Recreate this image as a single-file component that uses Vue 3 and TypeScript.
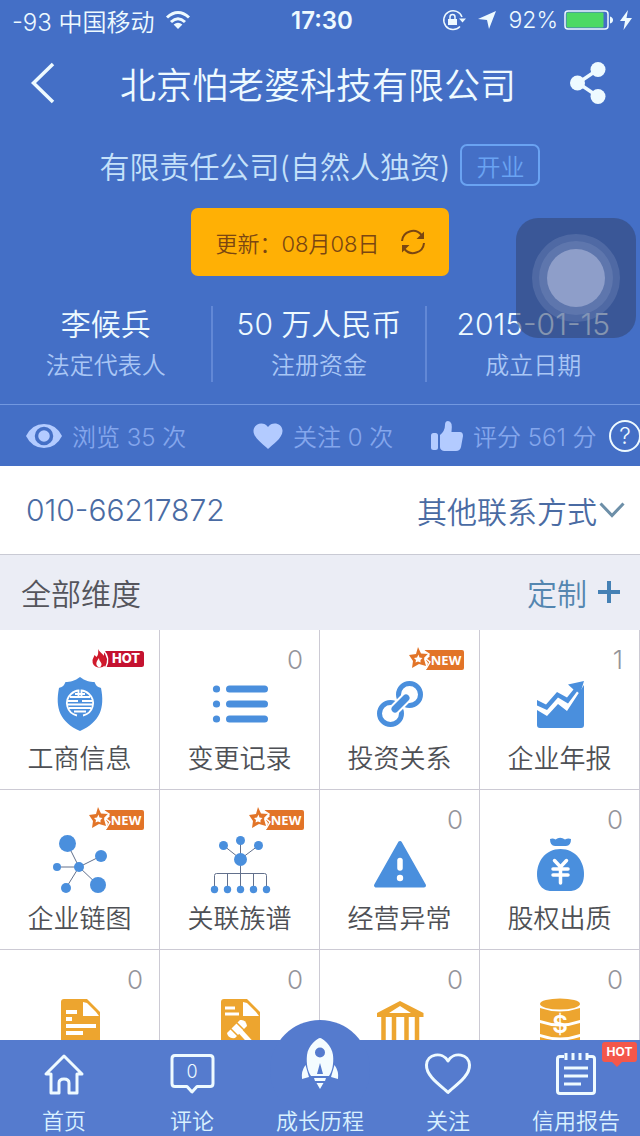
<script setup lang="ts">
interface Stat {
  value: string
  label: string
}

interface Dimension {
  name?: string
  icon: string
  count?: number
  badge?: 'hot' | 'new'
}

const stats: Stat[] = [
  { value: '李候兵', label: '法定代表人' },
  { value: '50 万人民币', label: '注册资金' },
  { value: '2015-01-15', label: '成立日期' },
]

const dimensions: Dimension[] = [
  { name: '工商信息', icon: 'shield', badge: 'hot' },
  { name: '变更记录', icon: 'list', count: 0 },
  { name: '投资关系', icon: 'link', badge: 'new' },
  { name: '企业年报', icon: 'chart', count: 1 },
  { name: '企业链图', icon: 'network', badge: 'new' },
  { name: '关联族谱', icon: 'tree', badge: 'new' },
  { name: '经营异常', icon: 'warning', count: 0 },
  { name: '股权出质', icon: 'bag', count: 0 },
  { icon: 'document', count: 0 },
  { icon: 'gavel', count: 0 },
  { icon: 'bank', count: 0 },
  { icon: 'coins', count: 0 },
]
</script>

<template>
  <div class="app">
    <header class="hero">
      <div class="status">
        <div class="status-side">
          <span>-93 中国移动</span>
          <svg class="wifi" viewBox="0 0 26 20" aria-hidden="true">
            <path d="M2 7.5Q13 -2.5 24 7.5M6 12Q13 5.6 20 12" fill="none" stroke="currentColor" stroke-width="3" />
            <path d="M8.6 14.6Q13 11 17.4 14.6L13 19Z" fill="currentColor" />
          </svg>
        </div>
        <time class="clock">17:30</time>
        <div class="status-side end">
          <svg class="lock" viewBox="0 0 24 22" aria-hidden="true">
            <path d="M20 8A9.4 9.4 0 1 0 18 17.6" fill="none" stroke="currentColor" stroke-width="1.5" />
            <path d="M17 9.5H24L20.5 13.5ZM6 10H15V16H6Z" fill="currentColor" />
            <path d="M8 10V8Q8 5.5 10.500 5.500T13 8V10" fill="none" stroke="currentColor" stroke-width="1.500" />
          </svg>
          <svg class="arrow" viewBox="0 0 18 18" aria-hidden="true">
            <path d="M18 0L11 18L9 9L0 8Z" fill="currentColor" />
          </svg>
          <span class="percent">92%</span>
          <svg class="battery" viewBox="0 0 50 20" aria-hidden="true">
            <rect x="1" y="1" width="43" height="18" rx="3" fill="none" stroke="currentColor" stroke-width="1.500" />
            <rect x="2.500" y="2.500" width="37" height="15" rx="1" fill="#4cd964" />
            <path d="M46 6.500Q49 7.500 49 10T46 13.500Z" fill="currentColor" />
          </svg>
          <svg class="bolt" viewBox="0 0 12 20" aria-hidden="true">
            <path d="M8 0L0 11H5L3.500 20L12 8H6.500Z" fill="currentColor" />
          </svg>
        </div>
      </div>

      <div class="title-bar">
        <button class="plain" type="button" aria-label="返回">
          <svg class="back" viewBox="0 0 26 44" aria-hidden="true">
            <path d="M23 3L3.500 22L23 41" fill="none" stroke="currentColor" stroke-width="3.500" />
          </svg>
        </button>
        <h1>北京怕老婆科技有限公司</h1>
        <button class="plain share-button" type="button" aria-label="分享">
          <svg class="share" viewBox="0 0 36 42" aria-hidden="true">
            <path d="M28 7.500L8 21L28 34.500" fill="none" stroke="currentColor" stroke-width="3.500" />
            <circle cx="28" cy="7.500" r="7.500" fill="currentColor" />
            <circle cx="7.500" cy="21" r="7.500" fill="currentColor" />
            <circle cx="28" cy="34.500" r="7.500" fill="currentColor" />
          </svg>
        </button>
      </div>

      <div class="kind">
        <span>有限责任公司(自然人独资)</span>
        <span class="tag">开业</span>
      </div>

      <button class="update" type="button">
        <span>更新：</span>
        <span class="date">08月08日</span>
        <svg class="refresh" viewBox="0 0 26 26" aria-hidden="true">
          <path d="M2 12A11 11 0 0 1 21.500 6M24 14A11 11 0 0 1 4.500 20" fill="none" stroke="currentColor" stroke-width="2" />
          <path d="M24 2.500V10H16.500ZM2 23.500V16H9.500Z" fill="currentColor" />
        </svg>
      </button>

      <dl class="stats">
        <div v-for="s in stats" :key="s.label" class="stat">
          <dt>{{ s.label }}</dt>
          <dd>{{ s.value }}</dd>
        </div>
      </dl>

      <div class="social">
        <span class="metric">
          <svg class="eye" viewBox="0 0 36 26" aria-hidden="true">
            <path d="M0 13Q6 1 18 1T36 13Q30 25 18 25T0 13Z" fill="currentColor" />
            <circle cx="18" cy="13" r="7.500" fill="none" stroke="#446fc6" stroke-width="3.500" />
            <path d="M18 9.500A3.500 3.500 0 1 0 21.500 13H18Z" fill="currentColor" />
          </svg>
          浏览 35 次
        </span>
        <span class="metric">
          <svg class="heart" viewBox="0 0 30 26" aria-hidden="true">
            <path d="M15 26C11 22 0 15 .5 7.500C1 0 11 -2 15 4C19 -2 29 0 29.500 7.500C30 15 19 22 15 26Z" fill="currentColor" />
          </svg>
          关注 0 次
        </span>
        <span class="metric">
          <svg class="thumb" viewBox="0 0 32 30" aria-hidden="true">
            <rect x="0" y="12" width="7" height="17" rx="2.500" fill="currentColor" />
            <path d="M9 14Q14 10 14 4Q14 0 17 0Q22 0 20.500 11H29Q32 11 32 15L30 26Q29 30 25 30H13Q9 29 9 26Z" fill="currentColor" />
          </svg>
          评分 561 分
        </span>
        <button class="help" type="button" aria-label="评分说明">?</button>
      </div>
    </header>

    <section class="contact">
      <a href="tel:010-66217872">010-66217872</a>
      <button class="plain more" type="button">
        其他联系方式
        <svg class="chevron" viewBox="0 0 26 18" aria-hidden="true">
          <path d="M1.500 2.500L13 14.500L24.500 2.500" fill="none" stroke="#6d8fa8" stroke-width="3" />
        </svg>
      </button>
    </section>

    <main class="dimensions">
      <div class="section-head">
        <h2>全部维度</h2>
        <button class="plain customize" type="button">
          定制
          <svg class="plus" viewBox="0 0 24 24" aria-hidden="true">
            <path d="M12 1V23M1 12H23" stroke="#4581b5" stroke-width="4" />
          </svg>
        </button>
      </div>

      <div class="grid">
        <button v-for="d in dimensions" :key="d.icon" class="cell" type="button">
          <span v-if="d.count !== undefined" class="count">{{ d.count }}</span>
          <svg v-if="d.badge === 'hot'" class="badge" viewBox="0 0 56 26" role="img" aria-label="HOT">
            <rect x="16" y="5" width="40" height="16" rx="2.500" fill="#c41230" />
            <path d="M10 3C12 7 17.500 9 18 15Q18 21 12 21.500H10Q4 20 4.500 14C5 12 6 11 6.500 9L8.500 11Q11 8 10 3Z" fill="#d01a2c" />
            <path d="M11 21.500C7 19 8 16 11 12C11 15.500 14 16 13.500 19Q13 21 11 21.500Z" fill="#fff" />
            <path d="M15 4Q23 12 17.500 22" fill="none" stroke="#fff" stroke-width="1.500" />
            <text x="38" y="17" class="badge-hot">HOT</text>
          </svg>
          <svg v-if="d.badge === 'new'" class="badge" viewBox="0 0 56 26" role="img" aria-label="NEW">
            <path d="M16 4H54Q56 4 56 6V22Q56 24 54 24H18L20 17L18 14L22 10Z" fill="#e27428" />
            <path d="M10 1L13 7.500L20 8L16 13L18 20L11 18L4 22L5 15L1 9L8 8Z" fill="#e27428" />
            <path d="M10.500 8.500L11.500 11.500L14.500 12L12.500 14L12.500 16.500L10 15.500L7.500 16.500L8 14L6 12L9 11.500Z" fill="#fff" />
            <path d="M15 4L21 8L17 12L22 16L18 23" fill="none" stroke="#fff" stroke-width="1.500" />
            <text x="38" y="19" class="badge-new">NEW</text>
          </svg>

          <svg class="icon" viewBox="48 42 64 64" aria-hidden="true">
            <g v-if="d.icon === 'shield'">
              <path d="M80 47C75 51 70 52 65.500 52C64 56 62 57 59 58C55 78 60 92 80 101C100 92 105 78 101 58C98 57 96 56 94.500 52C90 52 85 51 80 47Z" />
              <g fill="none" stroke="#fff" stroke-width="1.800">
                <path d="M77 85.500A12.500 12.500 0 0 1 71 64Q75 60.500 78.500 60.500V68M83 85.500A12.500 12.500 0 0 0 89 64Q85 60.500 81.500 60.500V68" />
                <path d="M70 67H90M68 71H78M82 71H92M67.500 74.500H92.500M69 78H91M74 81.500H86M75 64H85" />
              </g>
            </g>
            <g v-else-if="d.icon === 'list'">
              <template v-for="y in [59, 74, 89]" :key="y">
                <circle cx="56.500" :cy="y" r="3.600" />
                <rect x="66" :y="y - 3.5" width="42" height="7" rx="3.500" />
              </template>
            </g>
            <g v-else-if="d.icon === 'link'" fill="none">
              <circle cx="89.500" cy="64.500" r="11" stroke="#4a8fdd" stroke-width="5" />
              <circle cx="70.500" cy="83.500" r="11" stroke="#4a8fdd" stroke-width="5" />
              <path d="M75 79L86 68" stroke="#fff" stroke-width="11" stroke-linecap="round" />
              <path d="M75 79L86 68" stroke="#4a8fdd" stroke-width="7" stroke-linecap="round" />
            </g>
            <g v-else-if="d.icon === 'chart'">
              <path d="M57 80L67 86L78 74L87 81L104 55V95Q104 98 101 98H60Q57 98 57 95Z" />
              <path d="M57 70L66 74.500L77 62L87 67.500L93.500 59.500L88 54.500L104 51L100 64L97 61.500L88 73.500L78 67.500L67 80L57 75.500Z" />
            </g>
            <g v-else-if="d.icon === 'network'">
              <path d="M67 53L79 77L101 66M57 77H79L66 98M79 77L98 95" fill="none" stroke="#62708c" />
              <circle cx="79" cy="77" r="5" />
              <circle cx="67.500" cy="53.500" r="8.500" />
              <circle cx="101" cy="66" r="6" />
              <circle cx="98" cy="95" r="8" />
              <circle cx="66" cy="98" r="5" />
              <circle cx="57" cy="77" r="4" />
            </g>
            <g v-else-if="d.icon === 'tree'">
              <path d="M80.500 50V99M63.500 55.500L80.500 69L98.500 55.500M54.500 99V85.500Q54.500 83.500 56.500 83.500H104.500Q106.500 83.500 106.500 85.500V99M67.500 83.500V99M93.500 83.500V99" fill="none" stroke="#62708c" />
              <circle cx="80.500" cy="69.500" r="6.500" />
              <circle cx="80.500" cy="50.500" r="4.500" />
              <circle cx="63.500" cy="55.500" r="4.500" />
              <circle cx="98.500" cy="55.500" r="4.500" />
              <circle v-for="x in [54.5, 67.5, 80.5, 93.5, 106.5]" :key="x" :cx="x" cy="99.500" r="3.700" />
            </g>
            <g v-else-if="d.icon === 'warning'">
              <path d="M80 53L56 95.500H104Z" stroke="#4a8fdd" stroke-width="4" stroke-linejoin="round" />
              <path d="M80 70.500V78" stroke="#fff" stroke-width="5.500" stroke-linecap="round" />
              <circle cx="80" cy="88" r="3.200" fill="#fff" />
            </g>
            <g v-else-if="d.icon === 'bag'">
              <path d="M70 49Q73 48 75.500 49.500Q80 46 85 49.500Q88 48 91 49Q91 56 86 56H75Q70 56 70 49Z" />
              <path d="M80.500 59C96 59 104 72 104 84C104 97 96 101 90 101H71C65 101 57 97 57 84C57 72 65 59 80.500 59Z" />
              <path d="M74.500 70.500L80.500 77L86.500 70.500M80.500 77V93M73 79H88M73 85H88" fill="none" stroke="#fff" stroke-width="3.500" stroke-linecap="round" />
            </g>
            <g v-else-if="d.icon === 'document'" class="gold">
              <path d="M64 49H87L100 62V104H61V52Q61 49 64 49Z" />
              <path d="M83 52V66H99L96 62L87 53Z" fill="#fff" />
              <path d="M66 62H77M66 69H72M66 76H96M66 83H83" stroke="#fff" stroke-width="4" />
            </g>
            <g v-else-if="d.icon === 'gavel'" class="gold">
              <path d="M64 49H87L100 62V104H61V52Q61 49 64 49Z" />
              <path d="M83 52V66H99L96 62L87 53Z" fill="#fff" />
              <path d="M65 58H75M65 64H79" stroke="#fff" stroke-width="3" />
              <path d="M67 83L80 70Q86 69 87 76L75 88Q68 89 67 83Z" fill="#fff" />
              <path d="M70 78L79 87M76 72L85 81" stroke="#eda52f" stroke-width="1.500" />
              <path d="M80 81L92 94" stroke="#fff" stroke-width="5" />
            </g>
            <g v-else-if="d.icon === 'bank'" class="gold">
              <path d="M80 51L103.500 63V67H57V63ZM80 56L69 63H91Z" fill-rule="evenodd" />
              <path d="M63.500 67V96M74 67V96M86.500 67V96M97 67V96" stroke="#eda52f" stroke-width="4.500" />
              <path d="M57 98H104" stroke="#eda52f" stroke-width="5" />
            </g>
            <g v-else class="gold">
              <ellipse cx="80" cy="54" rx="20" ry="5.500" />
              <path d="M60 58Q80 65 100 58V70Q80 77 60 70ZM60 73Q80 80 100 73V84Q80 91 60 84ZM60 87Q80 94 100 87V97Q80 104 60 97Z" />
              <text x="80" y="83" class="dollar">$</text>
            </g>
          </svg>
          <span v-if="d.name" class="name">{{ d.name }}</span>
        </button>
      </div>
    </main>

    <nav class="tabs">
      <a href="#home" class="tab">
        <svg class="tab-icon" viewBox="36 10 56 50" aria-hidden="true">
          <path d="M64 16L46 34H51V53H59V43Q59 39 64 39T69 43V53H77V34H82Z" />
        </svg>
        <span>首页</span>
      </a>
      <a href="#comments" class="tab">
        <svg class="tab-icon" viewBox="36 10 56 50" aria-hidden="true">
          <path d="M47 15.500H82Q85 15.500 85 18.500V43.500Q85 46.500 82 46.500H69L64 52L59 46.500H47Q44 46.500 44 43.500V18.500Q44 15.500 47 15.500Z" />
          <text x="64" y="38" class="bubble-count">0</text>
        </svg>
        <span>评论</span>
      </a>
      <a href="#history" class="tab raised">
        <svg class="tab-icon" viewBox="36 10 56 50" aria-hidden="true">
          <g class="solid">
            <path d="M64 -2C62 -2 52 5 51 15C50 24 52 32 55 36H73C76 32 78 24 77 15C76 5 66 -2 64 -2ZM64 7.500A5 5 0 1 1 64 17.500A5 5 0 1 1 64 7.500ZM64 23L67 34H61Z" fill-rule="evenodd" />
            <path d="M49.500 25L53 37L46 39Q45 31 49.500 25ZM78.500 25L75 37L82 39Q83 31 78.500 25Z" />
            <path d="M58 38H70L69 41H59ZM60.500 43H67.500L64 49Z" />
          </g>
        </svg>
        <span>成长历程</span>
      </a>
      <a href="#follow" class="tab">
        <svg class="tab-icon" viewBox="36 10 56 50" aria-hidden="true">
          <path d="M64 52.500C59 47 42 37 42.500 25C43 14 58 11 64 21C70 11 85 14 85.500 25C86 37 69 47 64 52.500Z" />
        </svg>
        <span>关注</span>
      </a>
      <a href="#report" class="tab">
        <svg class="tab-icon" viewBox="36 10 56 50" aria-hidden="true">
          <path d="M52 16.500H48Q45.500 16.500 45.500 19V51Q45.500 53.500 48 53.500H80Q82.500 53.500 82.500 51V19Q82.500 16.500 80 16.500H76M54 13V20M61 13V20M68 13V20M75 13V20M52 28H76M52 36H76M52 44H69" />
        </svg>
        <span>信用报告</span>
        <span class="tab-hot">HOT</span>
      </a>
    </nav>

    <button class="assistive" type="button" aria-label="辅助触控">
      <span class="ring"><span class="ring inner"><span class="knob"></span></span></span>
    </button>
  </div>
</template>

<style>
body {
  margin: 0;
}
</style>

<style scoped>
.app {
  --blue: #446fc6;
  --pale: #eefaff;
  position: relative;
  display: flex;
  flex-direction: column;
  height: 100vh;
  overflow: hidden;
  background: #fff;
  font-family: Inter, "Noto Sans CJK SC", sans-serif;
  font-weight: 350;
}

.app *,
.app *::before {
  box-sizing: border-box;
}

button {
  font: inherit;
  color: inherit;
  padding: 0;
  border: 0;
  background: none;
  cursor: pointer;
}

a {
  color: inherit;
  text-decoration: none;
}

svg {
  display: block;
  flex: none;
}

.plain {
  display: flex;
  align-items: center;
}

.hero {
  flex: none;
  background: var(--blue);
  color: var(--pale);
}

.status {
  display: grid;
  grid-template-columns: 1fr auto 1fr;
  align-items: center;
  height: 40px;
  padding: 0 8px 0 12px;
  font-size: 24px;
}

.status-side {
  display: flex;
  align-items: center;
  gap: 10px;
  white-space: nowrap;
}

.end {
  justify-content: flex-end;
  gap: 6px;
}

.clock {
  font-weight: 600;
}

.percent {
  font-size: 23px;
}

.wifi {
  width: 26px;
  height: 20px;
}

.lock {
  width: 24px;
  height: 22px;
}

.arrow {
  width: 18px;
  height: 18px;
  margin: 0 6px;
}

.battery {
  width: 50px;
  height: 20px;
}

.bolt {
  width: 12px;
  height: 20px;
}

.title-bar {
  display: grid;
  grid-template-columns: 1fr auto 1fr;
  align-items: center;
  height: 86px;
  padding: 0 34px 0 30px;
}

h1 {
  margin: 0;
  font-size: 36px;
  font-weight: 350;
}

.back {
  width: 26px;
  height: 44px;
}

.share-button {
  justify-self: end;
}

.share {
  width: 36px;
  height: 42px;
}

.kind {
  display: flex;
  align-items: center;
  justify-content: center;
  gap: 10px;
  height: 78px;
  font-size: 30px;
  color: #c5e1fa;
}

.tag {
  display: flex;
  align-items: center;
  justify-content: center;
  width: 80px;
  height: 42px;
  border: 2px solid #6aa3f2;
  border-radius: 7px;
  font-size: 24px;
  color: #6aa3f2;
}

.update {
  display: flex;
  align-items: center;
  height: 68px;
  margin: 4px auto 0;
  padding: 0 23px 0 24px;
  border-radius: 7px;
  background: #ffb005;
  font-size: 22px;
  color: #7a4612;
}

.date {
  margin-right: 20px;
}

.refresh {
  width: 26px;
  height: 26px;
}

.stats {
  display: grid;
  grid-template-columns: repeat(3, 1fr);
  margin: 0;
  padding: 30px 0 22px;
}

.stat {
  display: flex;
  flex-direction: column-reverse;
  align-items: center;
  height: 76px;
}

.stat:not(:last-child) {
  border-right: 2px solid #6288d6;
}

.stat dt {
  line-height: 32px;
  font-size: 24px;
  color: #a9c6f5;
}

.stat dd {
  margin: 0 0 8px;
  line-height: 36px;
  font-size: 30px;
}

.social {
  display: grid;
  grid-template-columns: 227fr 178fr 178fr 31px;
  align-items: center;
  height: 62px;
  padding-left: 26px;
  border-top: 1px solid #7298e0;
  font-size: 24px;
  color: #84a6ec;
}

.metric {
  display: flex;
  align-items: center;
  gap: 10px;
  white-space: nowrap;
}

.metric svg {
  color: #b3cbff;
}

.eye {
  width: 36px;
  height: 26px;
}

.heart {
  width: 30px;
  height: 26px;
}

.thumb {
  width: 32px;
  height: 30px;
}

.help {
  width: 32px;
  height: 32px;
  border: 2px solid var(--pale);
  border-radius: 50%;
  font-size: 23px;
  line-height: 28px;
  color: var(--pale);
}

.contact {
  flex: none;
  display: flex;
  align-items: center;
  justify-content: space-between;
  height: 88px;
  padding: 0 15px 0 26px;
  font-size: 30px;
  color: #4a6ba3;
}

.chevron {
  width: 26px;
  height: 18px;
  margin-left: 2px;
}

.dimensions {
  flex: 1;
  min-height: 0;
  overflow: auto;
  scrollbar-width: none;
}

.section-head {
  display: flex;
  align-items: center;
  justify-content: space-between;
  height: 76px;
  padding: 0 19px 2px 21px;
  border-top: 1px solid #c9cad4;
  background: #ebedf5;
}

h2 {
  margin: 0;
  font-size: 30px;
  font-weight: 350;
  color: #55555c;
}

.customize {
  gap: 10px;
  font-size: 30px;
  color: #5486b0;
}

.plus {
  width: 24px;
  height: 24px;
}

.grid {
  display: grid;
  grid-template-columns: repeat(4, 1fr);
}

.cell {
  position: relative;
  display: flex;
  flex-direction: column;
  align-items: center;
  height: 160px;
  padding-top: 42px;
  border-right: 1px solid #cccad4;
  border-bottom: 1px solid #cccad4;
  font-size: 26px;
  color: #4e5055;
}

.icon {
  width: 64px;
  height: 64px;
  fill: #4a8fdd;
}

.gold {
  fill: #eda52f;
}

.dollar {
  fill: #fff;
  font-size: 24px;
  font-weight: 600;
  text-anchor: middle;
}

.name {
  margin-top: 3px;
  line-height: 40px;
}

.count {
  position: absolute;
  top: 14px;
  right: 16px;
  line-height: 32px;
  color: #94949a;
}

.badge {
  position: absolute;
  top: 16px;
  right: 15px;
  width: 56px;
  height: 26px;
}

.badge-hot,
.badge-new {
  fill: #fff;
  font-size: 13px;
  font-weight: 800;
  text-anchor: middle;
}

.badge-new {
  font-family: "Open Sans", sans-serif;
  font-weight: 700;
}

.tabs {
  position: relative;
  flex: none;
  display: grid;
  grid-template-columns: repeat(5, 1fr);
  height: 96px;
  background: #557bce;
  color: #d9f1ff;
}

.tab {
  position: relative;
  display: flex;
  flex-direction: column;
  align-items: center;
  padding-top: 10px;
  font-size: 22px;
  line-height: 32px;
}

.tab-icon {
  position: relative;
  width: 56px;
  height: 50px;
  margin-bottom: 5px;
  overflow: visible;
  fill: none;
  stroke: var(--pale);
  stroke-width: 3px;
  stroke-linejoin: round;
}

.solid {
  fill: #f4fcff;
  stroke: none;
}

.bubble-count {
  fill: var(--pale);
  stroke: none;
  font-size: 18px;
  text-anchor: middle;
}

.raised::before {
  content: "";
  position: absolute;
  top: -20px;
  width: 100px;
  height: 100px;
  border-radius: 50%;
  background: #557bce;
}

.raised span {
  position: relative;
}

.tab-hot {
  position: absolute;
  top: 2px;
  right: 3px;
  width: 35px;
  height: 20px;
  border-radius: 3px;
  background: #f4574a;
  font-size: 12px;
  font-weight: 700;
  line-height: 20px;
  text-align: center;
  color: #fff;
}

.tab-hot::after {
  content: "";
  position: absolute;
  top: 20px;
  left: 10px;
  border: 5px solid transparent;
  border-top-color: #f4574a;
  border-bottom: 0;
}

.assistive {
  position: absolute;
  top: 218px;
  right: 4px;
  display: grid;
  place-items: center;
  width: 120px;
  height: 120px;
  border-radius: 22px;
  background: rgba(50, 70, 115, 0.56);
}

.ring {
  display: grid;
  place-items: center;
  width: 88px;
  height: 88px;
  border-radius: 50%;
  background: rgba(130, 150, 195, 0.3);
}

.inner {
  width: 74px;
  height: 74px;
}

.knob {
  width: 58px;
  height: 58px;
  border-radius: 50%;
  background: #8e9ec9;
}
</style>
